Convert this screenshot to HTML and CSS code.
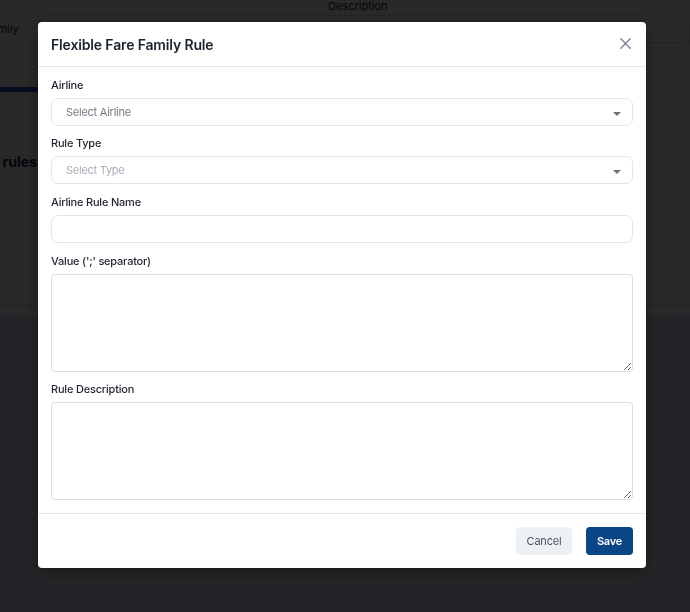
FILE: index.html
```html
<!DOCTYPE html>
<html lang="en">
<head>
<meta charset="utf-8">
<title>Flexible Fare Family Rule</title>
<link rel="stylesheet" href="styles.css">
</head>
<body>
<div class="page">
  <div class="card">
    <div class="bg-row bg-top">
      <div class="bg-left"></div>
      <div class="bg-right"><span class="bg-label">Description</span></div>
    </div>
    <div class="bg-row bg-inputs">
      <div class="bg-left"><div class="bg-box bg-box-left"><span>Fare Family</span></div></div>
      <div class="bg-right"><div class="bg-box"></div></div>
    </div>
    <div class="bg-tabs"><div class="bg-tab"></div></div>
    <div class="bg-heading-row"><div class="bg-heading"><span>Fare family rules</span></div></div>
    <div class="bg-table">
      <div class="bg-tr h1"></div>
      <div class="bg-tr h2"></div>
      <div class="bg-tr h3"></div>
      <div class="bg-tr h4"></div>
    </div>
  </div>
</div>

<div class="overlay">
  <div class="modal" role="dialog">
    <div class="modal-header">
      <h2 class="modal-title">Flexible Fare Family Rule</h2>
      <button class="close" aria-label="Close">
        <svg width="11" height="11" viewBox="0 0 11 11"><path d="M0.8 0.8 L10.2 10.2 M10.2 0.8 L0.8 10.2" stroke="#7b8494" stroke-width="1.4" fill="none" stroke-linecap="round"/></svg>
      </button>
    </div>
    <div class="modal-body">
      <div class="field">
        <label class="label">Airline</label>
        <div class="select">
          <span class="placeholder">Select Airline</span>
          <span class="caret"></span>
        </div>
      </div>
      <div class="field">
        <label class="label">Rule Type</label>
        <div class="select disabled">
          <span class="placeholder">Select Type</span>
          <span class="caret"></span>
        </div>
      </div>
      <div class="field wide-gap">
        <label class="label">Airline Rule Name</label>
        <input class="input" type="text">
      </div>
      <div class="field wide-gap">
        <label class="label">Value (';' separator)</label>
        <textarea class="textarea"></textarea>
      </div>
      <div class="field">
        <label class="label">Rule Description</label>
        <textarea class="textarea"></textarea>
      </div>
    </div>
    <div class="modal-footer">
      <button class="btn btn-cancel">Cancel</button>
      <button class="btn btn-save">Save</button>
    </div>
  </div>
</div>
</body>
</html>
```

FILE: styles.css
```css
html, body {
  margin: 0;
  padding: 0;
}
body {
  background: #dbe1f0;
  font-family: Inter, "Noto Sans", sans-serif;
  width: 690px;
  height: 612px;
  overflow: hidden;
}

/* background page */
.page {
  width: 690px;
}
.card {
  background: #ffffff;
  height: 315px;
  display: flex;
  flex-direction: column;
}
.bg-row {
  display: grid;
  grid-template-columns: 315px 1fr;
  column-gap: 13px;
}
.bg-top {
  height: 15px;
  border-bottom: 1px solid #e4e7ec;
}
.bg-label {
  font-size: 11px;
  line-height: 12px;
  color: #1f2430;
  display: block;
}
.bg-inputs {
  height: 27px;
  border-bottom: 1px solid #e4e7ec;
}
.bg-box {
  height: 26px;
  margin-top: 4px;
  border: 1px solid #d8dde6;
  border-radius: 6px;
}
.bg-box-left {
  display: flex;
  justify-content: flex-end;
  align-items: flex-start;
  margin-left: -100px;
  padding-right: 295px;
  padding-top: 1px;
  font-size: 11px;
  color: #1f2430;
  white-space: nowrap;
}
.bg-tabs {
  height: 48px;
  display: flex;
  align-items: flex-end;
  border-bottom: 1px solid #e4e7ec;
}
.bg-tab {
  width: 120px;
  height: 5px;
  background: #1f55b8;
}
.bg-heading-row {
  height: 60px;
  display: flex;
  align-items: center;
  border-top: 1px solid #e4e7ec;
  margin-top: 20px;
}
.bg-heading {
  width: 37px;
  display: flex;
  justify-content: flex-end;
  white-space: nowrap;
  font-size: 14px;
  font-weight: 700;
  color: #0f2140;
  margin-top: 34px;
}
.bg-table {
  flex: 1;
}
.bg-tr {
  border-bottom: 1px solid #e4e7ec;
}
.bg-tr.h1 { height: 42px; }
.bg-tr.h2 { height: 35px; }
.bg-tr.h3 { height: 51px; }

/* overlay + modal */
.overlay {
  position: fixed;
  inset: 0;
  background: rgba(0, 0, 0, 0.84);
  padding-top: 22px;
  box-sizing: border-box;
}
.modal {
  width: 608px;
  margin-left: 38px;
  background: #ffffff;
  border-radius: 4px;
  box-shadow: 0 4px 18px rgba(0, 0, 0, 0.35);
}
.modal-header {
  height: 44px;
  padding: 0 15px 0 13px;
  display: flex;
  align-items: center;
  justify-content: space-between;
  border-bottom: 1px solid #e3e8ef;
}
.modal-title {
  margin: 0;
  font-size: 14px;
  font-weight: 600;
  color: #1c2130;
  letter-spacing: -0.15px;
}
.close {
  border: 0;
  background: none;
  padding: 0;
  width: 11px;
  height: 11px;
  display: flex;
  margin-top: -2px;
}
.modal-body {
  padding: 11px 13px 13px;
}
.field + .field {
  margin-top: 10px;
}
.field.wide-gap {
  margin-top: 11px;
}
.label {
  display: block;
  font-size: 11px;
  line-height: 15px;
  font-weight: 500;
  color: #1f2430;
  margin-bottom: 5px;
  letter-spacing: -0.2px;
}
.select {
  height: 28px;
  box-sizing: border-box;
  border: 1px solid #e1e6ee;
  border-radius: 7px;
  padding: 0 11px 0 14px;
  display: flex;
  align-items: center;
  justify-content: space-between;
  background: #fff;
}
.placeholder {
  font-size: 11px;
  color: #737985;
  letter-spacing: -0.25px;
}
.select.disabled .placeholder {
  color: #a9aeb7;
}
.caret {
  width: 0;
  height: 0;
  border-left: 4px solid transparent;
  border-right: 4px solid transparent;
  border-top: 4px solid #6b7280;
  margin-top: 3px;
}
.input {
  display: block;
  width: 100%;
  height: 28px;
  box-sizing: border-box;
  border: 1px solid #e1e6ee;
  border-radius: 7px;
  background: #fff;
  margin: 0;
}
.textarea {
  display: block;
  width: 100%;
  height: 98px;
  box-sizing: border-box;
  border: 1px solid #d9dce1;
  border-radius: 4px;
  background: #fff;
  margin: 0;
  font-family: Inter, sans-serif;
}
.modal-footer {
  border-top: 1px solid #e6e8eb;
  padding: 13px 13px;
  display: flex;
  justify-content: flex-end;
  gap: 14px;
}
.btn {
  height: 28px;
  border: 0;
  border-radius: 4px;
  font-family: Inter, sans-serif;
  font-size: 11px;
  letter-spacing: -0.2px;
  padding: 0 11px;
}
.btn-cancel {
  background: #edf1f5;
  color: #4a5260;
  width: 56px;
  padding: 0;
}
.btn-save {
  background: #0a4585;
  color: #ffffff;
  font-weight: 600;
  width: 47px;
  padding: 0;
}
```
